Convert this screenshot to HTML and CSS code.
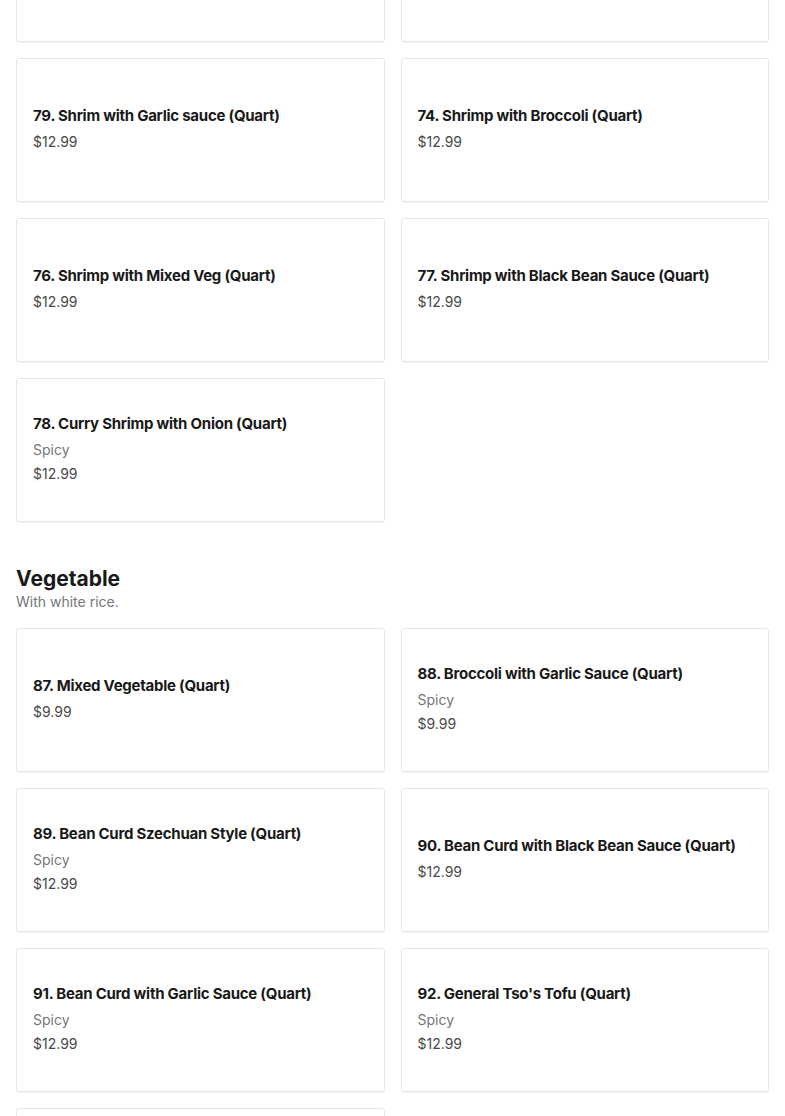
FILE: index.html
```html
<!DOCTYPE html>
<html>
<head>
<meta charset="utf-8">
<link rel="stylesheet" href="styles.css">
</head>
<body>
<main class="menu">
  <section class="section section-top">
    <div class="grid">
      <div class="card"><div class="card-body"></div></div>
      <div class="card"><div class="card-body"></div></div>
      <div class="card"><div class="card-body"><div class="title">79. Shrim with Garlic sauce (Quart)</div><div class="price">$12.99</div></div></div>
      <div class="card"><div class="card-body"><div class="title">74. Shrimp with Broccoli (Quart)</div><div class="price">$12.99</div></div></div>
      <div class="card"><div class="card-body"><div class="title">76. Shrimp with Mixed Veg (Quart)</div><div class="price">$12.99</div></div></div>
      <div class="card"><div class="card-body"><div class="title">77. Shrimp with Black Bean Sauce (Quart)</div><div class="price">$12.99</div></div></div>
      <div class="card"><div class="card-body"><div class="title">78. Curry Shrimp with Onion (Quart)</div><div class="desc">Spicy</div><div class="price">$12.99</div></div></div>
    </div>
  </section>
  <section class="section">
    <h2 class="section-title">Vegetable</h2>
    <p class="section-sub">With white rice.</p>
    <div class="grid">
      <div class="card"><div class="card-body"><div class="title">87. Mixed Vegetable (Quart)</div><div class="price">$9.99</div></div></div>
      <div class="card"><div class="card-body"><div class="title">88. Broccoli with Garlic Sauce (Quart)</div><div class="desc">Spicy</div><div class="price">$9.99</div></div></div>
      <div class="card"><div class="card-body"><div class="title">89. Bean Curd Szechuan Style (Quart)</div><div class="desc">Spicy</div><div class="price">$12.99</div></div></div>
      <div class="card"><div class="card-body"><div class="title">90. Bean Curd with Black Bean Sauce (Quart)</div><div class="price">$12.99</div></div></div>
      <div class="card"><div class="card-body"><div class="title">91. Bean Curd with Garlic Sauce (Quart)</div><div class="desc">Spicy</div><div class="price">$12.99</div></div></div>
      <div class="card"><div class="card-body"><div class="title">92. General Tso's Tofu (Quart)</div><div class="desc">Spicy</div><div class="price">$12.99</div></div></div>
      <div class="card"><div class="card-body"></div></div>
    </div>
  </section>
</main>
</body>
</html>
```
FILE: styles.css
```css
html, body {
  margin: 0;
  padding: 0;
  background: #fff;
}
body {
  font-family: Inter, "Noto Sans", sans-serif;
  color: #191919;
  overflow: hidden;
  height: 1116px;
}
.menu {
  padding: 0 16px;
  margin-top: -102px;
}
.section-top {
  margin-bottom: 43px;
}
.grid {
  display: grid;
  grid-template-columns: 1fr 1fr;
  gap: 16px;
}
.card {
  height: 144px;
  box-sizing: border-box;
  border: 1px solid #e6e6e6;
  border-radius: 3px;
  box-shadow: 0 1px 1px rgba(0,0,0,0.05);
  display: flex;
  align-items: center;
  padding: 0 16px;
}
.card-body {
  display: flex;
  flex-direction: column;
  gap: 4px;
  margin-top: -4px;
}
.title {
  font-size: 15px;
  font-weight: 650;
  line-height: 24px;
  letter-spacing: -0.25px;
  color: #191919;
}
.desc {
  font-size: 14px;
  line-height: 20px;
  color: #767676;
}
.price {
  font-size: 14px;
  line-height: 20px;
  color: #494949;
}
.section-title {
  margin: 0;
  font-size: 21px;
  line-height: 27px;
  font-weight: 700;
  color: #191919;
}
.section-sub {
  margin: 0 0 16px;
  font-size: 14px;
  line-height: 20px;
  color: #767676;
}
```
